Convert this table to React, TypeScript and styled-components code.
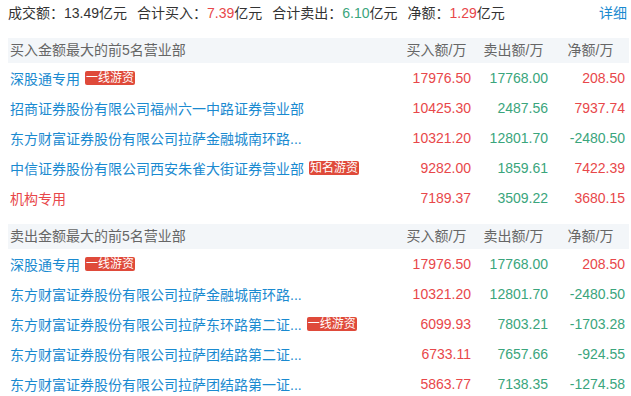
import React from "react";
import styled, { createGlobalStyle } from "styled-components";

const Global = createGlobalStyle`
  html, body { margin: 0; padding: 0; background: #fff; }
  body { font-family: "Liberation Sans", "Noto Sans CJK SC", sans-serif; font-size: 14px; color: #333; }
`;

const Page = styled.div`
  padding: 0 2px 0 8px;
  width: 631px;
  box-sizing: border-box;
`;

const Summary = styled.div`
  height: 26px;
  display: flex;
  align-items: center;
  gap: 10px;
  line-height: 26px;
  white-space: nowrap;
`;

const Stat = styled.span``;

const Val = styled.span<{ $tone?: "up" | "down" }>`
  color: ${(p) => (p.$tone === "up" ? "#e8474a" : p.$tone === "down" ? "#3aa57c" : "#333")};
`;

const Detail = styled.a`
  margin-left: auto;
  margin-right: 2px;
  color: #1a8ad0;
  text-decoration: none;
  cursor: pointer;
`;

const Table = styled.div<{ $top: number }>`
  margin-top: ${(p) => p.$top}px;
  display: grid;
  grid-template-columns: 1fr 77px 77px 77px;
`;

const Head = styled.div<{ $first?: boolean }>`
  height: 25px;
  line-height: 25px;
  background: #f3f6f9;
  color: #666;
  text-align: ${(p) => (p.$first ? "left" : "center")};
  padding-left: ${(p) => (p.$first ? "2px" : "0")};
  white-space: nowrap;
`;

const NameCell = styled.div`
  height: 30px;
  display: flex;
  align-items: center;
  padding-left: 2px;
  white-space: nowrap;
  overflow: hidden;
`;

const Name = styled.span<{ $inst?: boolean }>`
  color: ${(p) => (p.$inst ? "#e8474a" : "#1a8ad0")};
`;

const Badge = styled.span`
  margin-left: 5px;
  background: #df4a3a;
  color: #fff;
  font-size: 12px;
  line-height: 14px;
  height: 14px;
  padding: 0 1px;
  border-radius: 2px;
`;

const Num = styled.div<{ $tone: "up" | "down" }>`
  height: 30px;
  line-height: 30px;
  text-align: right;
  padding-right: 4px;
  color: ${(p) => (p.$tone === "up" ? "#e8474a" : "#3aa57c")};
`;

type Row = { name: string; badge?: string; inst?: boolean; buy: string; sell: string; net: string };

const buyRows: Row[] = [
  { name: "深股通专用", badge: "一线游资", buy: "17976.50", sell: "17768.00", net: "208.50" },
  { name: "招商证券股份有限公司福州六一中路证券营业部", buy: "10425.30", sell: "2487.56", net: "7937.74" },
  { name: "东方财富证券股份有限公司拉萨金融城南环路...", buy: "10321.20", sell: "12801.70", net: "-2480.50" },
  { name: "中信证券股份有限公司西安朱雀大街证券营业部", badge: "知名游资", buy: "9282.00", sell: "1859.61", net: "7422.39" },
  { name: "机构专用", inst: true, buy: "7189.37", sell: "3509.22", net: "3680.15" },
];

const sellRows: Row[] = [
  { name: "深股通专用", badge: "一线游资", buy: "17976.50", sell: "17768.00", net: "208.50" },
  { name: "东方财富证券股份有限公司拉萨金融城南环路...", buy: "10321.20", sell: "12801.70", net: "-2480.50" },
  { name: "东方财富证券股份有限公司拉萨东环路第二证...", badge: "一线游资", buy: "6099.93", sell: "7803.21", net: "-1703.28" },
  { name: "东方财富证券股份有限公司拉萨团结路第二证...", buy: "6733.11", sell: "7657.66", net: "-924.55" },
  { name: "东方财富证券股份有限公司拉萨团结路第一证...", buy: "5863.77", sell: "7138.35", net: "-1274.58" },
];

const Section = ({ title, rows, top }: { title: string; rows: Row[]; top: number }) => (
  <Table $top={top}>
    <Head $first>{title}</Head>
    <Head>买入额/万</Head>
    <Head>卖出额/万</Head>
    <Head>净额/万</Head>
    {rows.map((r, i) => (
      <React.Fragment key={i}>
        <NameCell>
          <Name $inst={r.inst}>{r.name}</Name>
          {r.badge && <Badge>{r.badge}</Badge>}
        </NameCell>
        <Num $tone="up">{r.buy}</Num>
        <Num $tone="down">{r.sell}</Num>
        <Num $tone={r.net.startsWith("-") ? "down" : "up"}>{r.net}</Num>
      </React.Fragment>
    ))}
  </Table>
);

export default function App() {
  return (
    <Page>
      <Global />
      <Summary>
        <Stat>成交额：<Val>13.49</Val>亿元</Stat>
        <Stat>合计买入：<Val $tone="up">7.39</Val>亿元</Stat>
        <Stat>合计卖出：<Val $tone="down">6.10</Val>亿元</Stat>
        <Stat>净额：<Val $tone="up">1.29</Val>亿元</Stat>
        <Detail>详细</Detail>
      </Summary>
      <Section title="买入金额最大的前5名营业部" rows={buyRows} top={12} />
      <Section title="卖出金额最大的前5名营业部" rows={sellRows} top={11} />
    </Page>
  );
}
